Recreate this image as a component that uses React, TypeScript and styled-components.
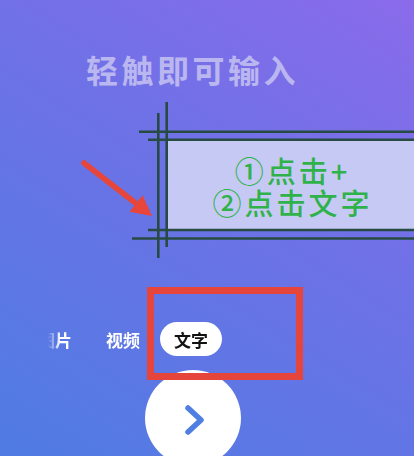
import React from "react";
import styled, { createGlobalStyle } from "styled-components";

const GlobalStyle = createGlobalStyle`
  html, body { margin: 0; padding: 0; background: #6b73e6; }
  body { font-family: "Noto Sans CJK SC", "Noto Sans", sans-serif; }
`;

const Screen = styled.div`
  position: relative;
  width: 414px;
  height: 456px;
  overflow: hidden;
  display: flex;
  flex-direction: column;
  background: linear-gradient(212deg, #8a6bea 0%, #6c72e6 45%, #4f7ce2 100%);
`;

const Title = styled.h1`
  margin: 49px 0 0 0;
  padding-left: 86px;
  height: 40px;
  font-size: 32px;
  line-height: 40px;
  font-weight: 700;
  letter-spacing: 3.5px;
  color: #bab7f0;
`;

const NoteBox = styled.div`
  align-self: flex-end;
  margin-top: 52px;
  width: 246px;
  height: 89px;
  flex: none;
  background: #c7c9f5;
  display: flex;
  flex-direction: column;
  align-items: center;
  justify-content: center;
  color: #2fb24a;
  font-size: 29px;
  line-height: 32px;
  letter-spacing: 3px;
  font-weight: 500;
`;

const NoteLine = styled.div`
  white-space: nowrap;
  padding-left: 3px;
  height: 32px;
`;

const TabRow = styled.div`
  margin-top: 92px;
  margin-left: 24px;
  display: flex;
  gap: 6px;
  align-items: center;
  height: 34px;
  flex: none;
  -webkit-mask-image: linear-gradient(to right, transparent 0px, transparent 24px, #000 36px);
  mask-image: linear-gradient(to right, transparent 0px, transparent 24px, #000 36px);
`;

const Tab = styled.div<{ $active?: boolean }>`
  height: 34px;
  padding: 0 14px;
  border-radius: 17px;
  display: flex;
  align-items: center;
  font-size: 17px;
  font-weight: 700;
  white-space: nowrap;
  color: ${(p) => (p.$active ? "#111" : "#ffffff")};
  background: ${(p) => (p.$active ? "#ffffff" : "transparent")};
`;

const NextButton = styled.div`
  margin-top: 14px;
  margin-left: 145px;
  width: 96px;
  height: 96px;
  flex: none;
  border-radius: 50%;
  background: #ffffff;
  display: flex;
  align-items: center;
  justify-content: center;
`;

const Overlay = styled.svg`
  position: absolute;
  left: 0;
  top: 0;
  width: 414px;
  height: 456px;
  pointer-events: none;
`;

const LINE = "#274b42";

export default function App() {
  return (
    <>
      <GlobalStyle />
      <Screen>
        <Title>轻触即可输入</Title>
        <NoteBox>
          <NoteLine>①点击+</NoteLine>
          <NoteLine>②点击文字</NoteLine>
        </NoteBox>
        <TabRow>
          <Tab>图片</Tab>
          <Tab>视频</Tab>
          <Tab $active>文字</Tab>
        </TabRow>
        <NextButton>
          <svg width="96" height="96" viewBox="0 0 96 96">
            <path
              d="M43 38 L56 50 L43 62"
              fill="none"
              stroke="#4f7fe1"
              strokeWidth="5.5"
              strokeLinecap="round"
              strokeLinejoin="round"
            />
          </svg>
        </NextButton>
        <Overlay viewBox="0 0 414 456">
          <g stroke={LINE} strokeWidth="2.6">
            <line x1="158.3" y1="113" x2="158.3" y2="258" />
            <line x1="166.7" y1="102" x2="166.7" y2="247" />
            <line x1="139" y1="131.7" x2="414" y2="131.7" />
            <line x1="148" y1="139.7" x2="414" y2="139.7" />
            <line x1="148" y1="230" x2="414" y2="230" />
            <line x1="132" y1="238.5" x2="414" y2="238.5" />
          </g>
          <line
            x1="84"
            y1="163"
            x2="138"
            y2="205"
            stroke="#e8453b"
            strokeWidth="5.5"
            strokeLinecap="round"
          />
          <polygon points="152,216 129.5,211.8 142.6,195.2" fill="#e8453b" />
          <rect
            x="150.5"
            y="290.5"
            width="149"
            height="86"
            fill="none"
            stroke="#e5453a"
            strokeWidth="7"
          />
        </Overlay>
      </Screen>
    </>
  );
}
